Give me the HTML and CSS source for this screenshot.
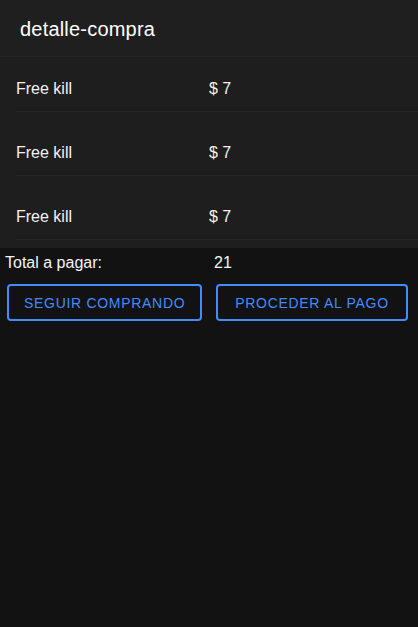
FILE: index.html
```html
<!DOCTYPE html>
<html lang="es">
<head>
<meta charset="utf-8">
<title>detalle-compra</title>
<link rel="stylesheet" href="styles.css">
</head>
<body>
  <header class="toolbar">
    <h1 class="title">detalle-compra</h1>
  </header>
  <main class="content">
    <ul class="list">
      <li class="item"><span class="name">Free kill</span><span class="price">$ 7</span></li>
      <li class="item"><span class="name">Free kill</span><span class="price">$ 7</span></li>
      <li class="item"><span class="name">Free kill</span><span class="price">$ 7</span></li>
    </ul>
    <div class="row total-row">
      <div class="col">Total a pagar:</div>
      <div class="col">21</div>
    </div>
    <div class="row buttons-row">
      <div class="col"><button class="btn">Seguir comprando</button></div>
      <div class="col"><button class="btn">Proceder al pago</button></div>
    </div>
  </main>
</body>
</html>
```

FILE: styles.css
```css
* { box-sizing: border-box; }
html, body {
  margin: 0;
  padding: 0;
  height: 100%;
  background: #121212;
  color: #ffffff;
  font-family: "Liberation Sans", Arial, sans-serif;
}
.toolbar {
  height: 57px;
  background: #1f1f1f;
  border-bottom: 1px solid #242424;
  display: flex;
  align-items: center;
  padding: 3px 20px 0;
}
.title {
  margin: 0;
  font-size: 20px;
  font-weight: 400;
  letter-spacing: 0.01em;
  color: #ffffff;
}
.list {
  list-style: none;
  margin: 0;
  padding: 7px 0 8px;
  background: #1e1e1e;
  display: flex;
  flex-direction: column;
  gap: 16px;
}
.item {
  height: 48px;
  margin-left: 16px;
  border-bottom: 1px solid #252525;
  display: grid;
  grid-template-columns: 193px 1fr;
  align-items: center;
  font-size: 16px;
  color: #f2f2f2;
  padding-top: 3px;
}
.row {
  display: grid;
  grid-template-columns: 209px 1fr;
}
.col {
  padding: 5px;
}
.total-row {
  font-size: 16px;
  line-height: 18px;
  color: #f4f4f4;
}
.total-row .col {
  padding-top: 6px;
  padding-bottom: 4px;
}
.buttons-row .col {
  padding-top: 8px;
}
.btn {
  margin: 0 2px;
  height: 37px;
  min-width: 192px;
  padding: 0 15px;
  background: transparent;
  border: 2px solid #428cff;
  border-radius: 4px;
  color: #428cff;
  font-family: "Liberation Sans", Arial, sans-serif;
  font-size: 14px;
  letter-spacing: 0.05em;
  text-transform: uppercase;
  white-space: nowrap;
}
```
